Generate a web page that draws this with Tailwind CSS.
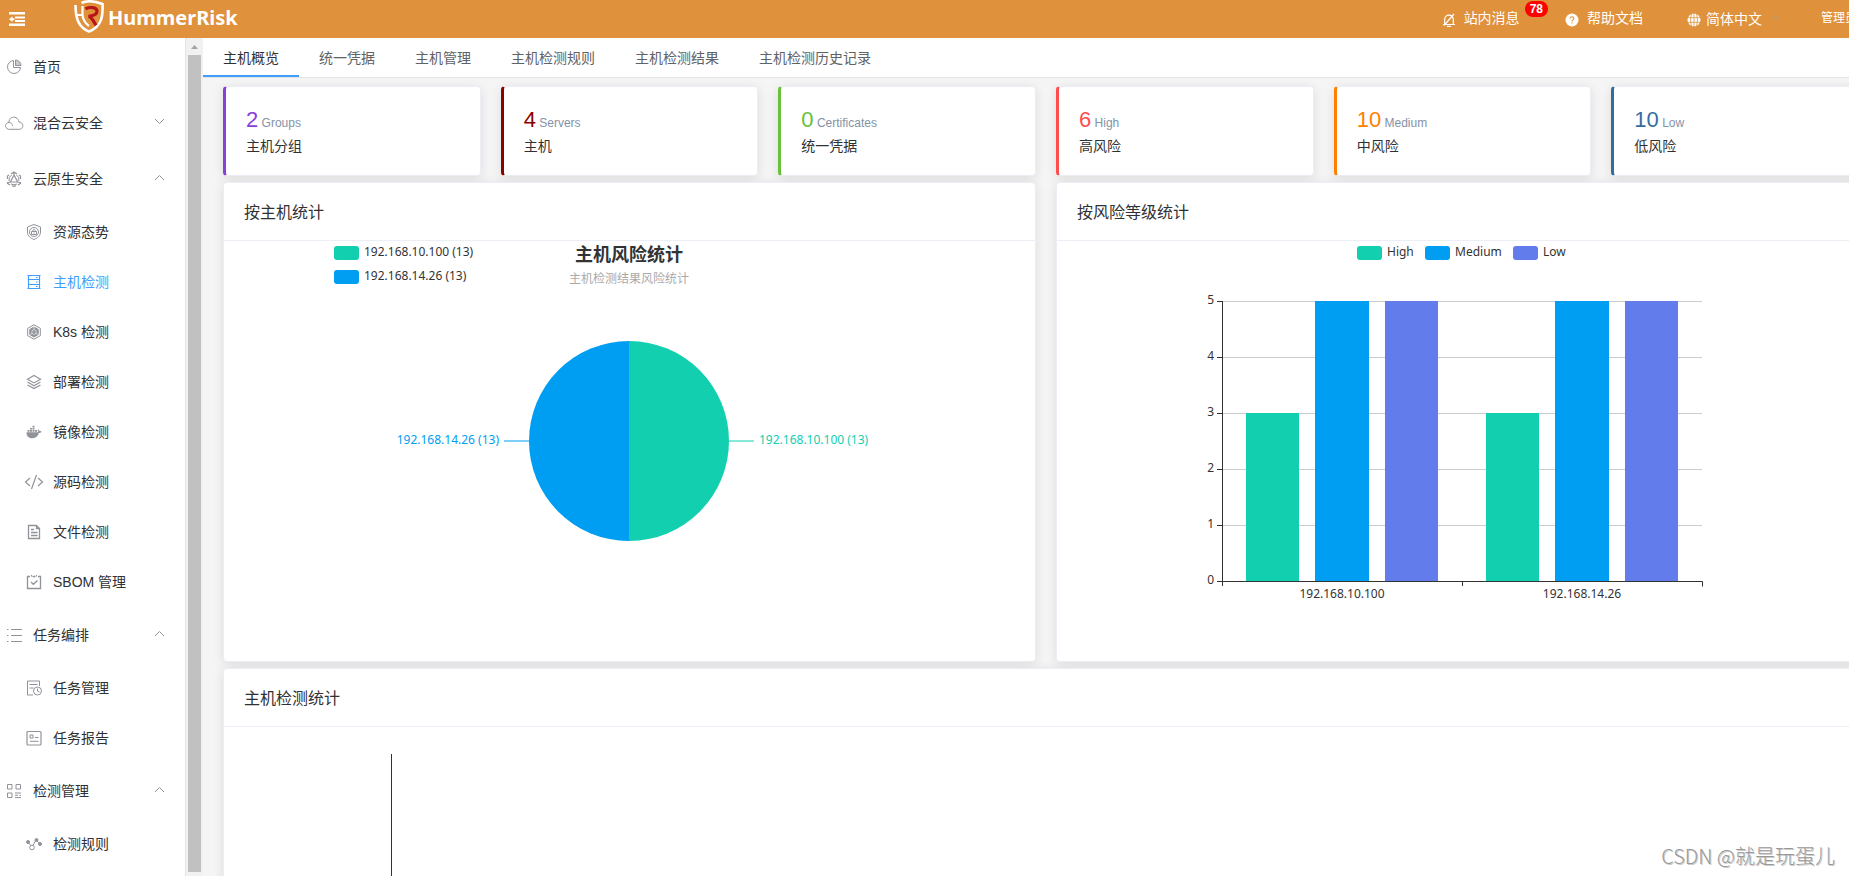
<!DOCTYPE html>
<html lang="zh-CN">
<head>
<meta charset="utf-8">
<title>HummerRisk</title>
<script src="https://cdn.jsdelivr.net/npm/@tailwindcss/browser@4"></script>
</head>
<body class="flex h-screen flex-col overflow-hidden bg-[#f5f5f5] font-['Liberation_Sans','Noto_Sans_CJK_SC',sans-serif] text-sm text-[#303133]">

<header class="-mr-10 flex h-[38px] shrink-0 items-center bg-[#df913b] pl-2 text-white whitespace-nowrap">
  <button type="button" aria-label="折叠菜单" class="mr-12 size-[18px]">
    <svg viewBox="0 0 18 18" class="size-[18px]" fill="#fff"><path d="M1 2h16v2.500H1zM7 6.500h10v2H7zM7 10h10v2H7zM1 13.500h16v2.500H1zM1 9.200 4.500 6.300v1.900H6.500v2H4.500v1.900z"/></svg>
  </button>
  <a href="#" class="flex h-full items-center gap-1 font-['Noto_Sans'] text-xl font-bold">
    <svg viewBox="0 0 30 34" class="mb-1 h-[34px] w-[30px] shrink-0" fill="none">
      <path d="M7.500 3C12 .8 20 .8 28.500 4 29 15 28.500 26 15 31.600 6 28 1.500 21 1.500 5" stroke="#fff" stroke-width="2.600"/>
      <path d="M2 15h6M8.500 6v8c0 6 2.500 9 6.500 12" stroke="#fff" stroke-width="2.200"/>
      <path d="M11.500 8.800C15 7 23 6.500 23 11.500c0 3.500-4 4.300-8.500 4.800 3.500.5 5.500 5.500 7.500 9" stroke="#b91518" stroke-width="3.200"/>
    </svg>
    <span class="mb-[3px]">HummerRisk</span>
  </a>
  <nav class="mr-8 ml-auto flex h-full items-center pb-[2px]">
    <a href="#" class="flex items-center gap-2">
      <svg viewBox="0 0 14 14" class="mt-1 size-[14px]" fill="none" stroke="#fff" stroke-width="1.200"><path d="M1 11.500h12M2.700 11V6.500a4.300 4.300 0 0 1 8.600 0V11M5 13.300h4M12 1 2 12.500"/></svg>
      <span>站内消息</span>
    </a>
    <span class="mr-[17px] mb-[18px] ml-[5px] rounded-full bg-[#fe0000] px-1 text-xs leading-4 font-bold">&#8202;78&#8202;</span>
    <a href="#" class="mr-11 flex items-center gap-2">
      <svg viewBox="0 0 14 14" class="mt-1 size-[14px]"><circle cx="7" cy="7" r="6.500" fill="#fff"/><path d="M5.100 5.500c.2-2.400 3.900-2.100 3.800 0 0 1.400-1.900 1.400-1.900 2.700M7 9.300v1.300" fill="none" stroke="#df913b" stroke-width="1.100"/></svg>
      <span>帮助文档</span>
    </a>
    <button type="button" class="mr-10 flex items-center">
      <svg viewBox="0 0 14 14" class="mt-1 mr-[5px] size-[14px]"><circle cx="7" cy="7" r="6.500" fill="#fff"/><path d="M0 4.700h14M0 9.300h14M7 0v14M4.500 0Q2.500 7 4.500 14M9.500 0q2 7 0 14" fill="none" stroke="#df913b" stroke-width=".8"/></svg>
      <span class="mt-[2px]">简体中文</span>
      <svg viewBox="0 0 10 6" class="ml-[9px] h-[6px] w-[10px]" fill="none" stroke="#a99b8c"><path d="m1 .5 4 4 4-4"/></svg>
    </button>
    <button type="button" class="text-xs">管理员</button>
  </nav>
</header>

<div class="flex min-h-0 flex-1 overflow-hidden">
  <aside class="w-[186px] shrink-0 overflow-hidden border-r border-[#e4e4e4] bg-white pt-px">
    <nav class="text-[#303133] [&_svg]:size-4 [&_svg]:shrink-0 [&_svg]:fill-none [&_svg]:stroke-[#909399] [&_a]:flex [&_a]:h-[50px] [&_a]:items-center [&_a]:gap-[11px] [&_a]:pl-[26px] [&_button]:flex [&_button]:h-14 [&_button]:w-full [&_button]:items-center [&_button]:gap-[11px] [&_button]:pr-[18px] [&_button]:pl-[6px]">
      <button type="button"><svg viewBox="0 0 16 16"><path d="M7.500 1.500A6.500 6.500 0 1 0 14.500 8.500H7.500z"/><path d="M9.500 1V6.500H15A5.500 5.500 0 0 0 9.500 1z" fill="#c8c9cc"/></svg>首页</button>
      <button type="button"><svg viewBox="0 0 16 16" overflow="visible"><path d="M2.500 14.300C-2 13-1 7.500 3 7.500 2.500 1 12 0 13 7c5 .3 5 7 .5 7.300zM3 7.500c2 .2 3.300 1.300 3.600 3.200"/></svg>混合云安全<svg viewBox="0 0 16 16" class="mb-[5px] ml-auto"><path d="m4 6 4.500 4.500L13 6"/></svg></button>
      <button type="button"><svg viewBox="0 0 16 16"><path d="M5 3 8 1l3 2M13 4l1.500 1v3M14.500 11v1.500L12 14M10 14.500l-2 1-2-1M4 14l-2.500-1.500V11M1.500 8V5L3 4M8 4l-3.700 7h7.400zM4.300 11l-2.500 1M11.700 11l2.500 1M8 1v3" stroke-width="1.200"/><path d="M5.500 4Q2.500 6 3 10M10.500 4q3 2 2.500 6M5 13q3 1.500 6 0"/></svg>云原生安全<svg viewBox="0 0 16 16" class="mb-[5px] ml-auto"><path d="M4 11 8.500 6.500 13 11"/></svg></button>
      <a href="#"><svg viewBox="0 0 16 16"><path d="M8 .5 14.500 3v5c0 4-3 6-6.500 7.500C4.500 14 1.500 12 1.500 8V3z"/><circle cx="8" cy="8" r="4.500"/><path d="M5.500 7.500h5v3h-5zM6.500 7.500C6.500 5 9.500 5 9.500 7.500M8 8.500v1"/></svg>资源态势</a>
      <a href="#" class="text-[#409eff] [&_svg]:stroke-[#409eff]!" aria-current="page"><svg viewBox="0 0 16 16"><path d="M2.500 1.500h11v13h-11zM2.500 5.500h11M2.500 10.500h11M10 3.500h1.500M10 8h1.500M10 12.500h1.500M1.500 1.500h13M1.500 14.500h13" stroke-width="1.200"/></svg>主机检测</a>
      <a href="#"><svg viewBox="0 0 16 16"><path d="m8 .8 6.300 3.500v7.400L8 15.200l-6.300-3.500V4.300z"/><path fill="#909399" d="m8 3 4.200 2.400v5.200L8 13l-4.200-2.400V5.400z"/><path stroke="#fff" stroke-width=".6" d="m8 5.500 2 1.200v2.600l-2 1.200-2-1.200V6.700zM8 3v2.500M12 10.500l-2-1.200M4 10.500l2-1.200"/></svg>K8s 检测</a>
      <a href="#"><svg viewBox="0 0 16 16"><path d="m8 1.500 6.500 3.700L8 8.900 1.500 5.200zM1.500 8 8 11.700 14.500 8M1.500 10.900 8 14.600l6.500-3.700" stroke-width="1.200"/></svg>部署检测</a>
      <a href="#"><svg viewBox="0 0 16 16"><path fill="#909399" stroke="none" d="M.5 8.200h11.700c.2-.8 0-1.600-.6-2.200l.7-.7c.7.500 1 1.100 1 1.800 1-.2 1.900 0 2.400.4-.3 1-1.400 1.500-2.800 1.400-1.200 3.700-3.600 5.300-7 5.300C2.500 14.200.5 12 .5 8.200zM1.500 6h2v1.700h-2zM4 6h2v1.700H4zM6.500 6h2v1.700h-2zM9 6h2v1.700H9zM4 3.900h2v1.700H4zM6.500 3.900h2v1.700h-2zM6.500 1.700h2v1.700h-2z"/></svg>镜像检测</a>
      <a href="#"><svg viewBox="0 0 16 16" overflow="visible"><path d="M4 4-.5 8 4 12M12 4l4.500 4-4.500 4M10.500 1 5.500 15" stroke-width="1.200"/></svg>源码检测</a>
      <a href="#"><svg viewBox="0 0 16 16"><path d="M2.500 1.500h8l3 3v10h-11zM10.500 1.500v3h3M5 5.500h3M5 8.500h6.500M5 11.500h6.500" stroke-width="1.300"/></svg>文件检测</a>
      <a href="#"><svg viewBox="0 0 16 16"><path d="M4 2.500H1.500v12h13v-12H12M6.500 2.500h3M5 8l2.300 2.300L11.500 6.500" stroke-width="1.300"/><path d="M5.500 1v1.500M10.500 1v1.500"/></svg>SBOM 管理</a>
      <button type="button"><svg viewBox="0 0 16 16"><path d="M5 2.500h11M5 8.500h11M5 14.500h11M1 2.500h1.500M1 8.500h1.500M1 14.500h1.500" stroke-width="1.200"/></svg>任务编排<svg viewBox="0 0 16 16" class="mb-[5px] ml-auto"><path d="M4 11 8.500 6.500 13 11"/></svg></button>
      <a href="#"><svg viewBox="0 0 16 16"><path d="M7 15H1.500V1h12v5M3.500 4.500h8M3.500 8h4"/><circle cx="11.500" cy="11" r="4"/><path d="M11.500 8.500V11l2 1"/></svg>任务管理</a>
      <a href="#"><svg viewBox="0 0 16 16"><rect x="1" y="1.500" width="14" height="13.500" rx="1" stroke-width="1.200"/><path d="M4 5h3v3H4zM9 7.500h3.500M4 11.300h8.500"/></svg>任务报告</a>
      <button type="button"><svg viewBox="0 0 16 16"><path d="M1.500 1.500H6V6H1.500zM10 1.500h4.500V6H10zM1.500 10H6v4.500H1.500zM9 10h6M9 12.300h3M9 14.600h6M13.500 12.300H15"/></svg>检测管理<svg viewBox="0 0 16 16" class="mb-[5px] ml-auto"><path d="M4 11 8.500 6.500 13 11"/></svg></button>
      <a href="#"><svg viewBox="0 0 16 16"><path d="m2 6 4 5 4-7 4 4"/><circle cx="2" cy="6" r="1.500" fill="#909399"/><circle cx="10.500" cy="4" r="1.500" fill="#909399"/><circle cx="14" cy="8" r="1.500" fill="#909399"/><circle cx="6" cy="11.500" r="2.300" fill="#fff"/></svg>检测规则</a>
    </nav>
  </aside>
  <div class="flex w-[17px] shrink-0 flex-col items-center bg-[#f1f1f1] pb-1" aria-hidden="true">
    <svg viewBox="0 0 17 17" class="size-[17px] shrink-0" fill="#a3a3a3"><path d="m5 11 3.500-4 3.500 4z"/></svg>
    <div class="w-[13px] flex-1 bg-[#c1c1c1]"></div>
  </div>

  <main class="-mr-10 min-w-0 flex-1 overflow-hidden">
    <nav class="flex h-10 border-b border-[#e4e4e4] bg-white text-[#606266] [&_a]:flex [&_a]:items-center [&_a]:px-5">
      <a href="#" class="border-b-2 border-[#409eff] pt-[2px] text-[#303133]" aria-current="page">主机概览</a>
      <a href="#">统一凭据</a>
      <a href="#">主机管理</a>
      <a href="#">主机检测规则</a>
      <a href="#">主机检测结果</a>
      <a href="#">主机检测历史记录</a>
    </nav>

    <div class="flex flex-col gap-[6px] px-5 pt-2 [&_section]:rounded [&_section]:border [&_section]:border-[#ebeef5] [&_section]:bg-white [&_section]:shadow-[0_2px_12px_rgba(0,0,0,0.1)]">
      <div class="grid grid-cols-6 gap-5 [&_section]:h-[90px] [&_section]:border-l-3 [&_section]:px-5 [&_section]:pt-[18px] [&_b]:text-[22px] [&_b]:leading-[30px] [&_b]:font-normal [&_span]:text-xs [&_span]:text-[#8492a6] [&_p]:pt-px">
        <section class="border-l-[#8a3fdb]!"><div><b class="text-[#8a3fdb]">2</b><span> Groups</span></div><p>主机分组</p></section>
        <section class="border-l-[#8b0000]!"><div><b class="text-[#8b0000]">4</b><span> Servers</span></div><p>主机</p></section>
        <section class="border-l-[#67c23a]!"><div><b class="text-[#67c23a]">0</b><span> Certificates</span></div><p>统一凭据</p></section>
        <section class="border-l-[#ff4d4d]!"><div><b class="text-[#ff4d4d]">6</b><span> High</span></div><p>高风险</p></section>
        <section class="border-l-[#ff8000]!"><div><b class="text-[#ff8000]">10</b><span> Medium</span></div><p>中风险</p></section>
        <section class="border-l-[#336d9f]!"><div><b class="text-[#336d9f]">10</b><span> Low</span></div><p>低风险</p></section>
      </div>

      <div class="grid grid-cols-2 gap-5 [&_svg]:mx-auto">
        <section class="pb-5">
          <h2 class="flex h-[58px] items-center border-b border-[#ebeef5] px-5 pt-[2px] text-base">按主机统计</h2>
          <div class="pr-[2px]">
          <svg width="600" height="400" viewBox="0 0 600 400" class="font-['Noto_Sans','Noto_Sans_CJK_SC',sans-serif] text-xs" fill="#333">
            <rect x="5" y="5" width="25" height="14" rx="3" fill="#12cfb0"/>
            <text x="35" y="15">192.168.10.100 (13)</text>
            <rect x="5" y="29" width="25" height="14" rx="3" fill="#009ef3"/>
            <text x="35" y="39">192.168.14.26 (13)</text>
            <text x="300" y="20" text-anchor="middle" class="text-lg font-bold">主机风险统计</text>
            <text x="300" y="42" text-anchor="middle" fill="#aaa">主机检测结果风险统计</text>
            <path d="M300 100a100 100 0 0 1 0 200z" fill="#12cfb0"/>
            <path d="M300 300a100 100 0 0 1 0-200z" fill="#009ef3"/>
            <path d="M400 200h25" stroke="#12cfb0"/>
            <path d="M175 200h25" stroke="#009ef3"/>
            <text x="430" y="203" fill="#12cfb0">192.168.10.100 (13)</text>
            <text x="170" y="203" text-anchor="end" fill="#009ef3">192.168.14.26 (13)</text>
          </svg>
          </div>
        </section>
        <section class="pb-5">
          <h2 class="flex h-[58px] items-center border-b border-[#ebeef5] px-5 pt-[2px] text-base">按风险等级统计</h2>
          <div class="pr-[2px]">
          <svg width="600" height="400" viewBox="0 0 600 400" class="font-['Noto_Sans','Noto_Sans_CJK_SC',sans-serif] text-xs" fill="#333">
            <rect x="195" y="5" width="25" height="14" rx="3" fill="#12cfb0"/><text x="225" y="15">High</text>
            <rect x="263" y="5" width="25" height="14" rx="3" fill="#009ef3"/><text x="293" y="15">Medium</text>
            <rect x="351" y="5" width="25" height="14" rx="3" fill="#637ceb"/><text x="381" y="15">Low</text>
            <path d="M60 60.500h480M60 116.500h480M60 172.500h480M60 228.500h480M60 284.500h480" stroke="#ccc"/>
            <g fill="#12cfb0"><path d="M84 172h53v168H84zM324 172h53v168h-53z"/></g>
            <g fill="#009ef3"><path d="M153 60h54v280h-54zM393 60h54v280h-54z"/></g>
            <g fill="#637ceb"><path d="M223 60h53v280h-53zM463 60h53v280h-53z"/></g>
            <path d="M60.500 60v285M55 60.500h5M55 116.500h5M55 172.500h5M55 228.500h5M55 284.500h5M55 340.500h485.500v5M300.500 340v5" fill="none" stroke="#333"/>
            <g text-anchor="end"><text x="52" y="63">5</text><text x="52" y="119">4</text><text x="52" y="175">3</text><text x="52" y="231">2</text><text x="52" y="287">1</text><text x="52" y="343">0</text></g>
            <g text-anchor="middle"><text x="180" y="357">192.168.10.100</text><text x="420" y="357">192.168.14.26</text></g>
          </svg>
          </div>
        </section>
      </div>

      <section>
        <h2 class="flex h-[58px] items-center border-b border-[#ebeef5] px-5 pt-[2px] text-base">主机检测统计</h2>
        <svg height="400" class="w-full"><path d="M167.500 27v340" stroke="#333"/></svg>
      </section>
    </div>
  </main>
</div>

<div class="pointer-events-none absolute right-[14px] bottom-[6px] text-xl text-[#999] font-['Noto_Sans_CJK_SC',sans-serif] font-light [text-shadow:1px_1px_0_#ccc]">CSDN @就是玩蛋儿</div>
</body>
</html>
